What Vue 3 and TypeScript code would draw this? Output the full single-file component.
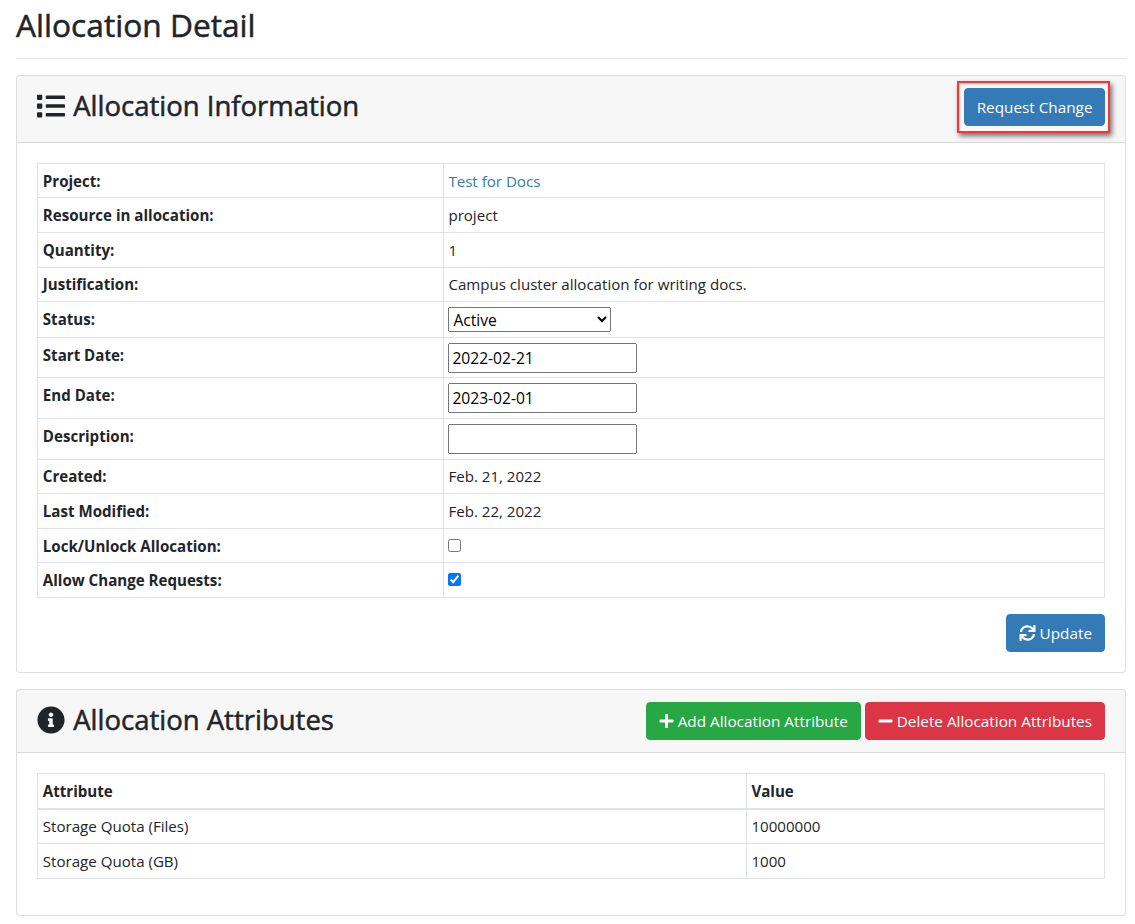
<template>
  <div class="page">
    <h2 class="title">Allocation Detail</h2>
    <hr class="rule" />

    <div class="card">
      <div class="card-header info-header">
        <h3>
          <svg class="head-icon" viewBox="0 0 512 512"><path :d="icons.list" /></svg>
          Allocation Information
        </h3>
        <div class="highlight-wrap">
          <a class="btn btn-primary request-btn">Request Change</a>
          <span class="highlight"></span>
        </div>
      </div>
      <div class="card-body">
        <table class="table info-table">
          <tbody>
            <tr><th>Project:</th><td><a class="link">Test for Docs</a></td></tr>
            <tr><th>Resource in allocation:</th><td>project</td></tr>
            <tr><th>Quantity:</th><td>1</td></tr>
            <tr><th>Justification:</th><td>Campus cluster allocation for writing docs.</td></tr>
            <tr>
              <th>Status:</th>
              <td>
                <select v-model="status" class="status-select">
                  <option>Active</option>
                  <option>Expired</option>
                  <option>Denied</option>
                </select>
              </td>
            </tr>
            <tr><th>Start Date:</th><td><input v-model="startDate" class="text-input" type="text" /></td></tr>
            <tr><th>End Date:</th><td><input v-model="endDate" class="text-input" type="text" /></td></tr>
            <tr><th>Description:</th><td><input v-model="description" class="text-input" type="text" /></td></tr>
            <tr><th>Created:</th><td>Feb. 21, 2022</td></tr>
            <tr><th>Last Modified:</th><td>Feb. 22, 2022</td></tr>
            <tr><th>Lock/Unlock Allocation:</th><td><input v-model="locked" type="checkbox" /></td></tr>
            <tr><th>Allow Change Requests:</th><td><input v-model="allowChange" type="checkbox" /></td></tr>
          </tbody>
        </table>
        <div class="actions">
          <a class="btn btn-primary">
            <svg class="btn-icon sync" viewBox="0 0 512 512"><path :d="icons.sync" /></svg>
            Update
          </a>
        </div>
      </div>
    </div>

    <div class="card">
      <div class="card-header attr-header">
        <h3>
          <svg class="head-icon" viewBox="0 0 512 512"><path :d="icons.info" /></svg>
          Allocation Attributes
        </h3>
        <div class="header-buttons">
          <a class="btn btn-success">
            <svg class="btn-icon" viewBox="0 0 448 512"><path :d="icons.plus" /></svg>
            Add Allocation Attribute
          </a>
          <a class="btn btn-danger">
            <svg class="btn-icon" viewBox="0 0 448 512"><path :d="icons.minus" /></svg>
            Delete Allocation Attributes
          </a>
        </div>
      </div>
      <div class="card-body">
        <table class="table attr-table">
          <thead>
            <tr><th>Attribute</th><th>Value</th></tr>
          </thead>
          <tbody>
            <tr v-for="attr in attributes" :key="attr.name">
              <td>{{ attr.name }}</td>
              <td>{{ attr.value }}</td>
            </tr>
          </tbody>
        </table>
      </div>
    </div>
  </div>
</template>

<script setup lang="ts">
import { ref } from 'vue'

interface Attribute {
  name: string
  value: string
}

const status = ref('Active')
const startDate = ref('2022-02-21')
const endDate = ref('2023-02-01')
const description = ref('')
const locked = ref(false)
const allowChange = ref(true)

const attributes: Attribute[] = [
  { name: 'Storage Quota (Files)', value: '10000000' },
  { name: 'Storage Quota (GB)', value: '1000' }
]

const icons = {
  list: 'M80 368H16a16 16 0 0 0-16 16v64a16 16 0 0 0 16 16h64a16 16 0 0 0 16-16v-64a16 16 0 0 0-16-16zm0-320H16A16 16 0 0 0 0 64v64a16 16 0 0 0 16 16h64a16 16 0 0 0 16-16V64a16 16 0 0 0-16-16zm0 160H16a16 16 0 0 0-16 16v64a16 16 0 0 0 16 16h64a16 16 0 0 0 16-16v-64a16 16 0 0 0-16-16zm416 176H176a16 16 0 0 0-16 16v32a16 16 0 0 0 16 16h320a16 16 0 0 0 16-16v-32a16 16 0 0 0-16-16zm0-320H176a16 16 0 0 0-16 16v32a16 16 0 0 0 16 16h320a16 16 0 0 0 16-16V80a16 16 0 0 0-16-16zm0 160H176a16 16 0 0 0-16 16v32a16 16 0 0 0 16 16h320a16 16 0 0 0 16-16v-32a16 16 0 0 0-16-16z',
  info: 'M256 8C119.043 8 8 119.083 8 256c0 136.997 111.043 248 248 248s248-111.003 248-248C504 119.083 392.957 8 256 8zm0 110c23.196 0 42 18.804 42 42s-18.804 42-42 42-42-18.804-42-42 18.804-42 42-42zm56 254c0 6.627-5.373 12-12 12h-88c-6.627 0-12-5.373-12-12v-24c0-6.627 5.373-12 12-12h12v-64h-12c-6.627 0-12-5.373-12-12v-24c0-6.627 5.373-12 12-12h64c6.627 0 12 5.373 12 12v100h12c6.627 0 12 5.373 12 12v24z',
  sync: 'M440.65 12.57l4 82.77A247.16 247.16 0 0 0 255.83 8C134.73 8 33.91 94.92 12.29 209.82A12 12 0 0 0 24.09 224h49.05a12 12 0 0 0 11.67-9.26 175.91 175.91 0 0 1 317-56.94l-101.46-4.86a12 12 0 0 0-12.57 12v47.41a12 12 0 0 0 12 12H500a12 12 0 0 0 12-12V12a12 12 0 0 0-12-12h-47.37a12 12 0 0 0-11.98 12.57zM255.83 432a175.61 175.61 0 0 1-146-77.8l101.8 4.87a12 12 0 0 0 12.57-12v-47.4a12 12 0 0 0-12-12H12a12 12 0 0 0-12 12V500a12 12 0 0 0 12 12h47.35a12 12 0 0 0 12-12.6l-4.15-82.57A247.17 247.17 0 0 0 255.83 504c121.11 0 221.93-86.92 243.55-201.82a12 12 0 0 0-11.8-14.18h-49.05a12 12 0 0 0-11.67 9.26A175.86 175.86 0 0 1 255.83 432z',
  plus: 'M416 208H272V64c0-17.67-14.33-32-32-32h-32c-17.67 0-32 14.33-32 32v144H32c-17.67 0-32 14.33-32 32v32c0 17.67 14.33 32 32 32h144v144c0 17.67 14.33 32 32 32h32c17.67 0 32-14.33 32-32V304h144c17.67 0 32-14.33 32-32v-32c0-17.67-14.33-32-32-32z',
  minus: 'M416 208H32c-17.67 0-32 14.33-32 32v32c0 17.67 14.33 32 32 32h384c17.67 0 32-14.33 32-32v-32c0-17.67-14.33-32-32-32z'
}
</script>

<style>
body {
  background: #fff;
}
</style>

<style scoped>
.page {
  width: 1110px;
  padding: 6px 0 0 16px;
  font-family: "Open Sans", "Liberation Sans", sans-serif;
  font-size: 15.1px;
  line-height: 24px;
  color: #212529;
}

.title {
  margin: 0;
  font-size: 31.7px;
  font-weight: 400;
  -webkit-text-stroke: 0.5px #212529;
  line-height: 38.4px;
}

.rule {
  margin: 13.4px 0 16px;
  border: 0;
  border-top: 1px solid rgba(0, 0, 0, 0.1);
}

.card {
  margin-bottom: 16px;
  background: #fff;
  border: 1px solid rgba(0, 0, 0, 0.125);
  border-radius: 4px;
}

.card-header {
  display: flex;
  justify-content: space-between;
  align-items: center;
  padding: 12px 20px;
  background: rgba(0, 0, 0, 0.03);
  border-bottom: 1px solid rgba(0, 0, 0, 0.125);
}

.card-header h3 {
  margin: 0;
  font-size: 27.5px;
  font-weight: 400;
  -webkit-text-stroke: 0.5px #212529;
  line-height: 33.6px;
}

.info-header {
  align-items: flex-start;
  padding-bottom: 16px;
}

.info-header h3 {
  margin-top: 1px;
}

.attr-header h3 {
  margin-bottom: 2px;
}

.head-icon {
  width: 28px;
  height: 28px;
  margin-right: 1px;
  vertical-align: -4px;
  fill: #212529;
}

.highlight-wrap {
  position: relative;
  display: flex;
}

.highlight {
  position: absolute;
  top: -7px;
  left: -7px;
  right: -5px;
  bottom: -7px;
  border: 2px solid #ff3333;
  box-shadow: 2px 3px 5px rgba(0, 0, 0, 0.55), inset 1px 1px 2px rgba(0, 0, 0, 0.2);
  pointer-events: none;
}

.header-buttons {
  display: flex;
  gap: 4px;
}

.card-body {
  padding: 20px;
}

.table {
  width: 100%;
  border-collapse: collapse;
  margin-bottom: 16px;
}

.table th,
.table td {
  padding: 4.8px;
  border: 1px solid #dee2e6;
  text-align: left;
  vertical-align: top;
}

.table th {
  font-weight: 700;
}

.info-table th {
  width: 395px;
}

.attr-table th:first-child {
  width: 698px;
}

.attr-table thead th {
  border-bottom-width: 2px;
}

.link {
  color: #337ab7;
  cursor: pointer;
}

.status-select {
  display: block;
  width: 163px;
  height: 25px;
  font-family: inherit;
  font-size: 15.6px;
}

.text-input {
  display: block;
  box-sizing: border-box;
  width: 189px;
  height: 30px;
  font-family: inherit;
  font-size: 15.6px;
}

input[type="checkbox"] {
  margin: 2px 3px 3px 0;
}

.actions {
  display: flex;
  justify-content: flex-end;
}

.btn {
  display: inline-block;
  box-sizing: border-box;
  padding: 6px 12px;
  border: 1px solid transparent;
  border-radius: 4px;
  font-size: 15.3px;
  line-height: 24px;
  color: #fff;
  cursor: pointer;
  white-space: nowrap;
}

.request-btn {
  padding: 6px 11.5px;
}

.btn-primary {
  background: #337ab7;
  border-color: #337ab7;
}

.btn-success {
  background: #28a745;
  border-color: #28a745;
}

.btn-danger {
  background: #dc3545;
  border-color: #dc3545;
}

.btn-icon {
  width: 15px;
  height: 16px;
  vertical-align: -2px;
  fill: #fff;
}

.btn-icon.sync {
  width: 17px;
}
</style>
